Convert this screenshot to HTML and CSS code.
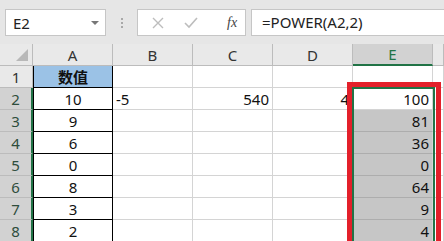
FILE: index.html
```html
<!DOCTYPE html>
<html lang="zh">
<head>
    <meta charset="UTF-8">
    <title>POWER</title>
    <link rel="stylesheet" href="styles.css">
</head>
<body>
    <div id="app">
        <div id="formula-bar">
            <div class="name-box">
                <span>E2</span>
                <span class="caret"></span>
            </div>
            <div class="grip">
                <i></i><i></i><i></i>
            </div>
            <div class="fx-buttons">
                <svg class="fx-icon" width="12" height="12" viewBox="0 0 12 12"><path d="M1 1 L11 11 M11 1 L1 11" stroke="#bdbdbd" stroke-width="1.4" fill="none"/></svg>
                <svg class="fx-icon" width="14" height="12" viewBox="0 0 14 12"><path d="M1 6 L5 10 L13 1" stroke="#bdbdbd" stroke-width="1.6" fill="none"/></svg>
                <span class="fx">fx</span>
            </div>
            <div class="formula-input">=POWER(A2,2)</div>
        </div>

        <div id="sheet">
            <div class="corner"><span class="tri"></span></div>
            <div class="col-head">A</div>
            <div class="col-head">B</div>
            <div class="col-head">C</div>
            <div class="col-head">D</div>
            <div class="col-head active">E</div>
            <div class="col-head"></div>

            <div class="row-head">1</div>
            <div class="cell a title">数值</div>
            <div class="cell"></div>
            <div class="cell"></div>
            <div class="cell"></div>
            <div class="cell"></div>
            <div class="cell"></div>

            <div class="row-head sel">2</div>
            <div class="cell a">10</div>
            <div class="cell">-5</div>
            <div class="cell num">540</div>
            <div class="cell num">4</div>
            <div class="cell num e-cur">100</div>
            <div class="cell"></div>

            <div class="row-head sel">3</div>
            <div class="cell a">9</div>
            <div class="cell"></div><div class="cell"></div><div class="cell"></div>
            <div class="cell num e-sel">81</div>
            <div class="cell"></div>

            <div class="row-head sel">4</div>
            <div class="cell a">6</div>
            <div class="cell"></div><div class="cell"></div><div class="cell"></div>
            <div class="cell num e-sel">36</div>
            <div class="cell"></div>

            <div class="row-head sel">5</div>
            <div class="cell a">0</div>
            <div class="cell"></div><div class="cell"></div><div class="cell"></div>
            <div class="cell num e-sel">0</div>
            <div class="cell"></div>

            <div class="row-head sel">6</div>
            <div class="cell a">8</div>
            <div class="cell"></div><div class="cell"></div><div class="cell"></div>
            <div class="cell num e-sel">64</div>
            <div class="cell"></div>

            <div class="row-head sel">7</div>
            <div class="cell a">3</div>
            <div class="cell"></div><div class="cell"></div><div class="cell"></div>
            <div class="cell num e-sel">9</div>
            <div class="cell"></div>

            <div class="row-head sel">8</div>
            <div class="cell a">2</div>
            <div class="cell"></div><div class="cell"></div><div class="cell"></div>
            <div class="cell num e-sel">4</div>
            <div class="cell"></div>

            <!-- selection outline and red highlight sit over the grid -->
            <div class="selection"></div>
            <div class="highlight"></div>
        </div>
    </div>
</body>
</html>
```

FILE: styles.css
```css
:root {
    --chrome-bg: #e6e6e6;
    --box-border: #c6c6c6;
    --grid-line: #d4d4d4;
    --head-bg: #e9e9e9;
    --head-sel: #d2d2d2;
    --head-line: #bcbcbc;
    --excel-green: #217346;
    --sel-fill: #c6c6c6;
    --title-bg: #9bc2e6;
    --red: #e3202a;
}

body {
    margin: 0;
    width: 444px;
    height: 241px;
    overflow: hidden;
    background: #fff;
    font-family: "Noto Sans", "Noto Sans CJK SC", sans-serif;
    font-size: 15px;
    color: #111;
}

#formula-bar {
    height: 44px;
    background: var(--chrome-bg);
    display: flex;
    align-items: flex-start;
    padding-top: 9px;
    padding-left: 5px;
    box-sizing: border-box;
}

.name-box {
    width: 101px;
    height: 27px;
    box-sizing: border-box;
    background: #fff;
    border: 1px solid var(--box-border);
    display: flex;
    align-items: center;
    justify-content: space-between;
    padding: 0 6px 0 7px;
    font-size: 15px;
    color: #222;
}

.caret {
    width: 0;
    height: 0;
    border-left: 4px solid transparent;
    border-right: 4px solid transparent;
    border-top: 4px solid #777;
}

.grip {
    width: 31px;
    height: 27px;
    display: flex;
    flex-direction: column;
    align-items: center;
    justify-content: center;
    gap: 2px;
}
.grip i {
    width: 2px;
    height: 2px;
    background: #a8a8a8;
}

.fx-buttons {
    width: 109px;
    height: 27px;
    box-sizing: border-box;
    background: #fff;
    border: 1px solid var(--box-border);
    display: flex;
    align-items: center;
    padding-left: 14px;
    gap: 20px;
}
.fx {
    margin-left: 9px;
    font-family: "Liberation Serif", serif;
    font-style: italic;
    font-size: 14px;
    color: #444;
}

.formula-input {
    flex: 1;
    height: 27px;
    margin-left: 5px;
    box-sizing: border-box;
    background: #fff;
    border: 1px solid var(--box-border);
    border-right: none;
    padding-left: 10px;
    line-height: 25px;
    color: #222;
}

/* --- Sheet grid --- */
#sheet {
    position: relative;
    display: grid;
    grid-template-columns: 33px 80px 80px 80px 80px 80px 1fr;
    grid-template-rows: 22px repeat(8, 22px);
}

.corner,
.col-head,
.row-head {
    background: var(--head-bg);
    box-sizing: border-box;
    border-right: 1px solid var(--head-line);
    border-bottom: 1px solid var(--head-line);
    color: #333;
    display: flex;
    align-items: center;
    justify-content: center;
}
.corner {
    position: relative;
}
.tri {
    position: absolute;
    right: 4px;
    bottom: 4px;
    width: 0;
    height: 0;
    border-left: 12px solid transparent;
    border-bottom: 12px solid #b8b8b8;
}
.col-head.active {
    background: var(--head-sel);
    border-bottom: 2px solid var(--excel-green);
    color: var(--excel-green);
}
.row-head.sel {
    background: var(--head-sel);
    border-right: 2px solid var(--excel-green);
    color: #2e4d3c;
}

.cell {
    box-sizing: border-box;
    border-right: 1px solid var(--grid-line);
    border-bottom: 1px solid var(--grid-line);
    display: flex;
    align-items: center;
    padding: 0 3px;
    white-space: nowrap;
}
.cell.num {
    justify-content: flex-end;
}
.cell.a {
    justify-content: center;
    border: 1px solid #000;
    border-top: none;
}
.cell.a.title {
    background: var(--title-bg);
    font-weight: bold;
    font-family: "Noto Sans CJK SC", sans-serif;
    border-top: none;
}
.cell.e-sel {
    background: var(--sel-fill);
    border-bottom-color: #adadad;
}

.selection {
    position: absolute;
    left: 352px;
    top: 43px;
    width: 83px;
    height: 160px;
    border: 2px solid var(--excel-green);
    box-sizing: border-box;
    pointer-events: none;
}

.highlight {
    position: absolute;
    left: 347px;
    top: 38px;
    width: 94px;
    height: 170px;
    border: 5px solid var(--red);
    box-sizing: border-box;
    pointer-events: none;
}
```
